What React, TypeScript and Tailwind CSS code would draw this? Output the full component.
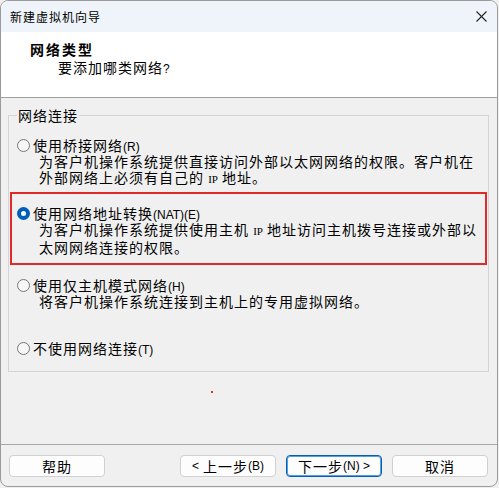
import React from 'react';

const cjk = "font-['Noto_Sans_CJK_SC','Noto_Sans',sans-serif]";
const latin = "font-['Liberation_Sans',Arial,sans-serif] text-[12px] tracking-normal";

const Lat: React.FC<{ children: React.ReactNode }> = ({ children }) => (
  <span className={latin}>{children}</span>
);

const Radio: React.FC<{ checked?: boolean }> = ({ checked }) =>
  checked ? (
    <span className="flex items-center justify-center w-[13px] h-[13px] rounded-full bg-[#005fb8] shrink-0">
      <span className="w-[5px] h-[5px] rounded-full bg-white" />
    </span>
  ) : (
    <span className="w-[13px] h-[13px] rounded-full border border-[#767676] bg-[#f7f7f7] shrink-0" />
  );

interface OptionProps {
  checked?: boolean;
  label: React.ReactNode;
  lines?: React.ReactNode[];
}

const Option: React.FC<OptionProps> = ({ checked, label, lines = [] }) => (
  <div>
    <div className="flex items-center gap-[3px] h-[18px]">
      <Radio checked={checked} />
      <span className="whitespace-nowrap">{label}</span>
    </div>
    {lines.map((l, i) => (
      <div key={i} className="pl-[22px] leading-[15.5px] whitespace-nowrap">
        {l}
      </div>
    ))}
  </div>
);

const Button: React.FC<{ children: React.ReactNode; primary?: boolean }> = ({ children, primary }) => (
  <button
    className={
      primary
        ? 'w-[96px] h-[22px] rounded-[4px] bg-[#fdfdfd] border border-[#005fb8] shadow-[inset_0_0_0_1px_#5a9fd8] flex items-center justify-center leading-none'
        : 'w-[96px] h-[22px] rounded-[4px] bg-[#fdfdfd] border border-[#d0d0d0] flex items-center justify-center leading-none'
    }
  >
    {children}
  </button>
);

export default function App() {
  return (
    <div className={`w-[499px] h-[488px] bg-[#f0f0f0] ${cjk} text-black text-[14px] tracking-[1px]`}>
      <div className="w-[498px] h-[487px] rounded-[8px] border border-[#9a9a9a] overflow-hidden flex flex-col bg-[#f0f0f0]">
        {/* title bar */}
        <div className="h-[31px] bg-[#eef4f9] flex items-center justify-between pl-[9px] pr-[10px] shrink-0">
          <span className="text-[12px] tracking-[1px]">新建虚拟机向导</span>
          <svg width="11" height="11" viewBox="0 0 11 11" stroke="#222" strokeWidth="1.1">
            <line x1="0.5" y1="0.5" x2="10.5" y2="10.5" />
            <line x1="10.5" y1="0.5" x2="0.5" y2="10.5" />
          </svg>
        </div>

        {/* header */}
        <div className="h-[66px] bg-white border-b border-[#a0a0a0] pl-[29px] pt-[8px] shrink-0">
          <div className="font-bold leading-[18px] tracking-[2px]">网络类型</div>
          <div className="pl-[28px] leading-[18px]">
            要添加哪类网络<Lat>?</Lat>
          </div>
        </div>

        {/* body */}
        <div className="flex-1 flex flex-col px-[7px] pt-[8px]">
          <fieldset className="border border-[#d4d4d4] w-[481px] pb-[13px]">
            <legend className="ml-[8px] px-[1px] leading-[18px]">网络连接</legend>

            <div className="mt-[12px] px-[8px]">
              <Option
                label={<>使用桥接网络<Lat>(R)</Lat></>}
                lines={[
                  '为客户机操作系统提供直接访问外部以太网网络的权限。客户机在',
                  <>外部网络上必须有自己的 <span className="font-['Liberation_Serif',serif] text-[11px] tracking-normal">IP</span> 地址。</>,
                ]}
              />
            </div>

            <div className="mt-[5px] mx-[1px] border-2 border-[#e02a2a] pl-[5px] pt-[10px] pb-[8px]">
              <Option
                checked
                label={<>使用网络地址转换<Lat>(NAT)(E)</Lat></>}
                lines={[
                  <>为客户机操作系统提供使用主机 <span className="font-['Liberation_Serif',serif] text-[11px] tracking-normal">IP</span> 地址访问主机拨号连接或外部以</>,
                  '太网网络连接的权限。',
                ]}
              />
            </div>

            <div className="mt-[11px] px-[8px]">
              <Option
                label={<>使用仅主机模式网络<Lat>(H)</Lat></>}
                lines={['将客户机操作系统连接到主机上的专用虚拟网络。']}
              />
            </div>

            <div className="mt-[30px] px-[8px]">
              <Option label={<>不使用网络连接<Lat>(T)</Lat></>} />
            </div>
          </fieldset>

          <div className="flex-1 pt-[19px] pl-[203px]">
            <div className="w-[2px] h-[2px] bg-[#c83a3a]" />
          </div>
        </div>

        {/* footer */}
        <div className="border-t border-[#a8a8a8] h-[42px] shrink-0 flex items-start pt-[10px] pl-[8px] pr-[9px]">
          <Button>帮助</Button>
          <div className="flex-1" />
          <div className="flex gap-[10px]">
            <Button>
              <Lat>&lt;</Lat>&nbsp;上一步<Lat>(B)</Lat>
            </Button>
            <Button primary>
              下一步<Lat>(N) &gt;</Lat>
            </Button>
            <Button>取消</Button>
          </div>
        </div>
      </div>
    </div>
  );
}
